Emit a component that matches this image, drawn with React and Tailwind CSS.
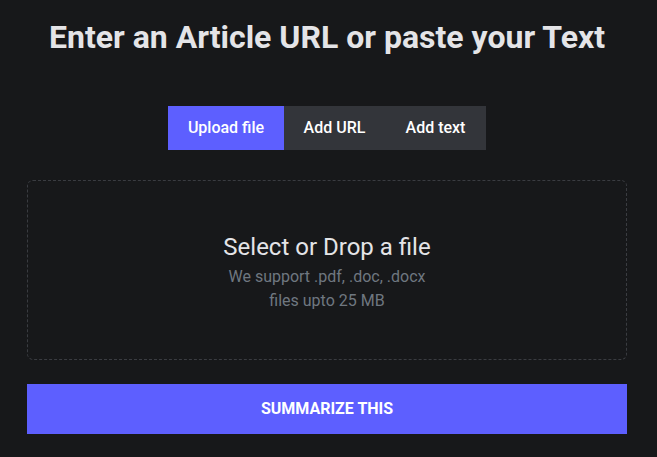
const tabs = ["Upload file", "Add URL", "Add text"];

export default function App() {
  const active = 0;

  return (
    <div
      className="min-h-[457px] w-full bg-[#17181a] pl-[27px] pr-[30px] pt-[17px]"
      style={{ fontFamily: "Roboto, 'Liberation Sans', sans-serif" }}
    >
      <h1 className="text-center text-[32px] font-bold leading-[40px] text-[#e4e4e7]">
        Enter an Article URL or paste your Text
      </h1>

      {/* tabs */}
      <div className="mt-[49px] flex justify-center">
        <div className="flex h-[44px] bg-[#33353a]">
          {tabs.map((t, i) => (
            <button
              key={t}
              className={`h-full text-[16px] font-medium text-white ${
                i === active ? "w-[116px] bg-[#5d5fff]" : "w-[101px] bg-transparent"
              }`}
            >
              {t}
            </button>
          ))}
        </div>
      </div>

      {/* drop zone */}
      <div className="mt-[30px] flex h-[180px] flex-col items-center justify-center rounded-[6px] border border-dashed border-[#3a3c41] pt-[4px] text-center">
        <p className="text-[24px] leading-[32px] text-[#e4e4e7]">Select or Drop a file</p>
        <p className="mt-[2px] text-[16px] leading-[24px] text-[#6f7780]">
          We support .pdf, .doc, .docx
        </p>
        <p className="text-[16px] leading-[24px] text-[#6f7780]">files upto 25 MB</p>
      </div>

      <button className="mt-[24px] h-[50px] w-full bg-[#5d5fff] text-[16px] font-bold uppercase text-white">
        Summarize this
      </button>
    </div>
  );
}
